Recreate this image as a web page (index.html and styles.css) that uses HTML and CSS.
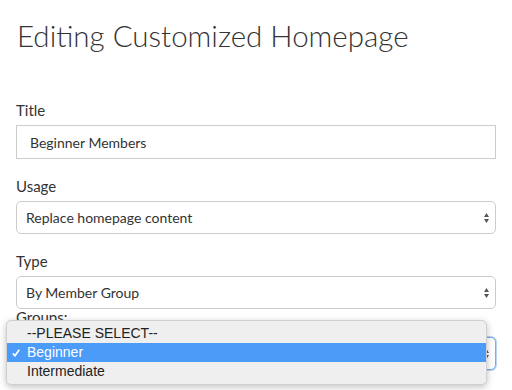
FILE: index.html
```html
<!DOCTYPE html>
<html lang="en">
<head>
    <meta charset="UTF-8">
    <meta name="viewport" content="width=device-width, initial-scale=1.0">
    <title>Editing Customized Homepage</title>
    <link rel="stylesheet" href="styles.css">
</head>
<body>
    <div class="page">
        <h1>Editing Customized Homepage</h1>
        <div class="form-group">
            <label for="title">Title</label>
            <input type="text" id="title" class="text-field" value="Beginner Members">
        </div>
        <div class="form-group">
            <label>Usage</label>
            <div class="select">
                <span>Replace homepage content</span>
                <svg class="arrows" width="5" height="10" viewBox="0 0 5 10"><path d="M0 4L2.5 0L5 4Z M0 6L2.5 10L5 6Z"/></svg>
            </div>
        </div>
        <div class="form-group last">
            <label>Type</label>
            <div class="select">
                <span>By Member Group</span>
                <svg class="arrows" width="5" height="10" viewBox="0 0 5 10"><path d="M0 4L2.5 0L5 4Z M0 6L2.5 10L5 6Z"/></svg>
            </div>
        </div>
        <div class="groups">
            <label class="small-label">Groups:</label>
            <div class="select focused">
                <span>Beginner</span>
                <svg class="arrows" width="5" height="10" viewBox="0 0 5 10"><path d="M0 4L2.5 0L5 4Z M0 6L2.5 10L5 6Z"/></svg>
            </div>
            <ul class="popup">
                <li>--PLEASE SELECT--</li>
                <li class="selected">
                    <svg class="check" width="8" height="8" viewBox="0 0 8 8"><path d="M0.8 4.4L3 6.8L7.2 0.8"/></svg>
                    Beginner
                </li>
                <li>Intermediate</li>
            </ul>
        </div>
    </div>
</body>
</html>
```

FILE: styles.css
```css
body {
    margin: 0;
    font-family: Lato, "Open Sans", sans-serif;
    color: #333;
    background: #fff;
}
.page {
    padding: 20px 16px 0;
    height: 390px;
    box-sizing: border-box;
}
h1 {
    font-family: "Lato Light", Lato, sans-serif;
    font-weight: 300;
    font-size: 29.5px;
    line-height: 32px;
    margin: 0 0 48px 1px;
    color: #333;
}
.form-group {
    margin-bottom: 17px;
}
.form-group.last {
    margin-bottom: 0;
}
label {
    display: block;
    font-size: 15px;
    line-height: 21px;
    margin-bottom: 4px;
}
.small-label {
    line-height: 17px;
    margin-bottom: 11px;
}
.text-field {
    display: block;
    box-sizing: border-box;
    width: 100%;
    height: 34px;
    margin: 0;
    padding: 0 13px;
    border: 1px solid #ccc;
    border-radius: 0;
    font-family: Lato, sans-serif;
    font-size: 14px;
    color: #333;
}
.select {
    box-sizing: border-box;
    height: 33px;
    display: flex;
    align-items: center;
    justify-content: space-between;
    padding: 0 6px 0 9px;
    border: 1px solid #ccc;
    border-radius: 5px;
    font-size: 14px;
    color: #333;
    background: #fff;
}
.select.focused {
    border-color: #7aaee8;
    box-shadow: 0 0 0 1px #b9d4f4;
}
.arrows {
    fill: #555;
}
.groups {
    position: relative;
}
.popup {
    position: absolute;
    top: 11px;
    left: -10px;
    width: 481px;
    box-sizing: border-box;
    margin: 0;
    padding: 3px 0;
    list-style: none;
    background: #efefef;
    border: 1px solid #d0d0d0;
    border-radius: 5px;
    box-shadow: 0 2px 7px rgba(0, 0, 0, 0.25);
    font-family: "Liberation Sans", Arial, sans-serif;
    font-size: 14px;
    color: #222;
}
.popup li {
    height: 19px;
    line-height: 19px;
    padding-left: 20px;
    position: relative;
}
.popup li.selected {
    background: #4b9bf9;
    color: #fff;
}
.check {
    position: absolute;
    left: 5px;
    top: 6px;
    fill: none;
    stroke: #fff;
    stroke-width: 1.7;
}
```
